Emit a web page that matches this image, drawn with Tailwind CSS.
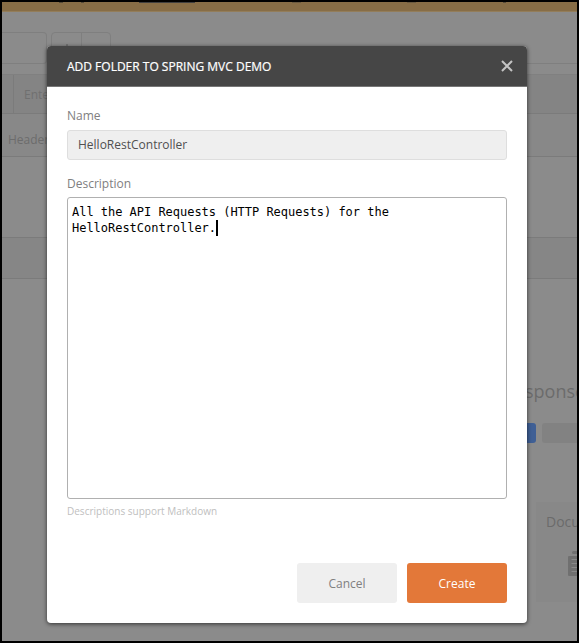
<!DOCTYPE html>
<html lang="en">
<head>
<meta charset="utf-8">
<title>Add folder</title>
<script src="https://cdn.jsdelivr.net/npm/@tailwindcss/browser@4"></script>
</head>
<body class="font-['Open_Sans',sans-serif]">
<div class="relative h-[643px] w-[579px] overflow-hidden border-2 border-black bg-[#8b8b8b] text-[#6b6b6b]">
  <!-- Dimmed workspace -->
  <div class="flex h-full flex-col">
    <div class="flex h-[10px] shrink-0 overflow-hidden border-b border-[#937d59] bg-[#876d46]">
      <div class="ml-[57px] h-px w-1 bg-[#554a38]"></div>
      <div class="ml-[18px] h-px w-[3px] bg-[#554a38]"></div>
      <div class="ml-[55px] h-px w-14 bg-[#3f3f3f]"></div>
      <div class="ml-[97px] h-px w-[9px] bg-[#6a5a40]"></div>
      <div class="ml-[106px] h-px w-[9px] bg-[#6a5a40]"></div>
      <div class="ml-[87px] h-px w-[3px] bg-[#554a38]"></div>
    </div>
    <div class="flex h-[63px] shrink-0 items-start border-b border-[#808080] pt-5">
      <div class="h-8 w-[45px] rounded-r border border-l-0 border-[#7f7f7f]"></div>
      <div class="ml-1 flex h-8 w-[60px] rounded border border-[#7f7f7f]">
        <div class="flex w-[30px] items-center justify-center border-r border-[#7f7f7f]">
          <svg class="size-[8px]" viewBox="0 0 10 10" stroke="#666" stroke-width="1.5"><path d="M5 0v10M0 5h10"/></svg>
        </div>
        <div class="flex flex-1 items-center justify-center gap-[3px]"><i class="size-[3px] rounded-full bg-[#7a7a7a]"></i><i class="size-[3px] rounded-full bg-[#7a7a7a]"></i><i class="size-[3px] rounded-full bg-[#7a7a7a]"></i></div>
      </div>
      <div class="ml-[340px] h-8 flex-1 border-b border-[#7f7f7f]"></div>
    </div>
    <div class="flex h-[39px] shrink-0 items-center border-b border-[#7b7b7b] bg-[#848484] text-[12px]">
      <div class="h-full w-3 border-r border-[#7b7b7b]"></div>
      <span class="pl-[10px] pt-[2px] text-[#707070]">Enter request URL</span>
    </div>
    <div class="flex h-[43px] shrink-0 items-center border-b border-[#7b7b7b] bg-[#888888] pl-[6px] pt-[9px] text-[12px] text-[#6c6c6c]">Headers</div>
    <div class="h-[81px] shrink-0 border-b border-[#7b7b7b]"></div>
    <div class="h-[41px] shrink-0 border-b border-[#7b7b7b] bg-[#868686]"></div>
    <div class="flex flex-1 flex-col items-end overflow-hidden pt-[100px]">
      <div class="h-[24px] w-[52px] whitespace-nowrap text-[18px] leading-[24px]">sponse</div>
      <div class="mt-[20px] flex gap-1.5">
        <div class="h-5 w-[60px] rounded-[3px] bg-[#3f5f95]"></div>
        <div class="h-5 w-[35px] rounded-l-[3px] bg-[#828282]"></div>
      </div>
      <div class="mt-[59px] h-[100px] w-[41px] overflow-hidden bg-[#888888] pl-[10px]">
        <div class="pt-[10px] text-[14px] leading-[20px]">Documentation</div>
        <svg class="ml-[22px] mt-[18px] h-[26px] w-[22px]" viewBox="0 0 22 26"><rect x="4" y="1" width="14" height="3" rx="1.5" fill="#707070"/><rect y="6" width="22" height="20" rx="1" fill="#707070"/><path d="M3.500 9.500h15M3.500 13.500h15M3.500 17.500h15M3.500 21.500h15" stroke="#898989"/></svg>
      </div>
    </div>
  </div>

  <!-- Folder dialog -->
  <section class="absolute left-[45px] top-[44px] flex h-[577px] w-[480px] flex-col overflow-hidden rounded bg-white shadow-[0_1px_4px_rgba(0,0,0,0.65)]">
    <header class="flex h-[41px] shrink-0 items-center justify-between border-b border-[#777] bg-[#464646] pl-5 pr-[14px]">
      <h1 class="pt-[2px] text-[12px] font-normal text-white [-webkit-text-stroke:0.2px_white]">ADD FOLDER TO SPRING MVC DEMO</h1>
      <svg class="size-3" viewBox="0 0 12 12" stroke="#c4c4c4" stroke-width="2"><path d="M1 1l10 10M11 1L1 11"/></svg>
    </header>
    <div class="flex flex-1 flex-col px-5 pb-5 pt-5 text-[12px] text-[#808080]">
      <label class="h-[23px] leading-[18px]">Name</label>
      <div class="flex h-[30px] items-center rounded-[3px] border border-[#dedede] bg-[#efefef] px-[10px] text-[#505050]">HelloRestController</div>
      <label class="mt-[14px] h-[23px] leading-[20px]">Description</label>
      <div class="h-[302px] rounded-[3px] border border-[#b0b0b0] px-1 pt-[6px] font-['DejaVu_Sans_Mono',monospace] text-[12px] leading-[16px] tracking-[-0.024px] text-black">All the API Requests (HTTP Requests) for the<br>HelloRestController.<span class="inline-block h-4 w-[2px] bg-black align-top"></span></div>
      <p class="mt-1 text-[10px] leading-[16px] text-[#c0c0c0]">Descriptions support Markdown</p>
      <div class="mt-auto flex justify-end gap-[10px]">
        <button class="h-10 w-[100px] rounded-[3px] bg-[#efefef] pt-[2px] text-[#808080]">Cancel</button>
        <button class="h-10 w-[100px] rounded-[3px] bg-[#e37839] pt-[2px] text-white">Create</button>
      </div>
    </div>
  </section>
</div>
</body>
</html>
